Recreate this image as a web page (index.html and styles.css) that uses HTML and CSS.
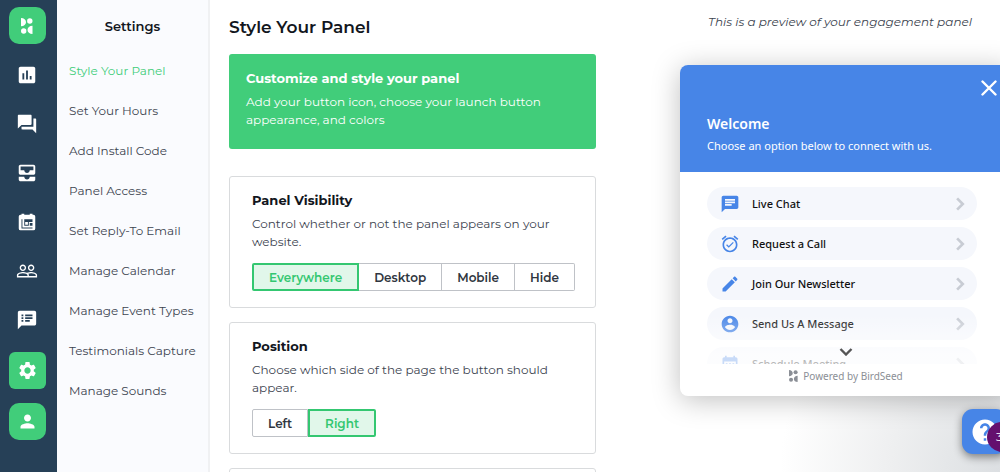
FILE: index.html
```html
<!DOCTYPE html>
<html lang="en">
<head>
  <meta charset="utf-8">
  <meta name="viewport" content="width=device-width, initial-scale=1.0">
  <title>Style Your Panel</title>
  <link rel="stylesheet" href="styles.css">
</head>
<body>
  <div class="app">

    <!-- Icon rail -->
    <nav class="rail" aria-label="Main">
      <a href="#" class="rail-item rail-logo" aria-label="BirdSeed">
        <svg viewBox="0 0 12 16" width="12" height="16"><path d="M0 0c3 0 5 2 5 4.200S3 8.200 0 8.200zM11.500 7.800c-3 0-5 2-5 4.100s2 4.100 5 4.100z"/><circle cx="8.800" cy="3" r="2.700"/><circle cx="2.700" cy="13" r="2.700"/></svg>
      </a>
      <a href="#" class="rail-item" aria-label="Reports">
        <svg viewBox="0 0 24 24" width="22" height="22"><path d="M19 3H5c-1.100 0-2 .9-2 2v14c0 1.100.9 2 2 2h14c1.100 0 2-.9 2-2V5c0-1.100-.9-2-2-2zM9 17H7v-7h2v7zm4 0h-2V7h2v10zm4 0h-2v-4h2v4z"/></svg>
      </a>
      <a href="#" class="rail-item" aria-label="Chats">
        <svg viewBox="0 0 24 24" width="22" height="22"><path d="M21 6h-2v9H6v2c0 .55.45 1 1 1h11l4 4V7c0-.55-.45-1-1-1zm-4 6V3c0-.55-.45-1-1-1H3c-.55 0-1 .45-1 1v14l4-4h10c.55 0 1-.45 1-1z"/></svg>
      </a>
      <a href="#" class="rail-item" aria-label="Inbox">
        <svg viewBox="0 0 24 24" width="22" height="22"><path d="M19 3H5c-1.100 0-2 .9-2 2v7c0 1.100.9 2 2 2h14c1.100 0 2-.9 2-2V5c0-1.100-.9-2-2-2zm0 6h-4c0 1.620-1.380 3-3 3s-3-1.380-3-3H5V5h14v4zm-4 7h6v3c0 1.100-.9 2-2 2H5c-1.100 0-2-.9-2-2v-3h6c0 1.660 1.340 3 3 3s3-1.340 3-3z"/></svg>
      </a>
      <a href="#" class="rail-item" aria-label="Calendar">
        <svg viewBox="0 0 24 24" width="22" height="22"><path fill-rule="evenodd" d="M5 4h1V3h3v1h6V3h3v1h1a2 2 0 0 1 2 2v13a2 2 0 0 1-2 2H5a2 2 0 0 1-2-2V6a2 2 0 0 1 2-2zM6 9v10h12v-1H7V9zm3 0v7h5v-4h4V9zm1 3h3v3h-3zm5 1v3h3v-3z"/></svg>
      </a>
      <a href="#" class="rail-item" aria-label="Contacts">
        <svg viewBox="0 0 24 24" width="22" height="22"><path d="M16.500 13c-1.200 0-3.070.34-4.500 1-1.430-.67-3.300-1-4.500-1C5.330 13 1 14.080 1 16.250V19h22v-2.750c0-2.170-4.330-3.250-6.500-3.250zm-4 4.500h-10v-1.250c0-.54 2.560-1.750 5-1.750s5 1.210 5 1.750v1.250zm9 0H14v-1.250c0-.46-.2-.86-.52-1.220.88-.3 1.960-.53 3.020-.53 2.440 0 5 1.210 5 1.750v1.250zM7.500 12c1.930 0 3.500-1.570 3.500-3.500S9.430 5 7.500 5 4 6.570 4 8.500 5.570 12 7.500 12zm0-5.500c1.100 0 2 .9 2 2s-.9 2-2 2-2-.9-2-2 .9-2 2-2zm9 5.500c1.930 0 3.500-1.570 3.500-3.500S18.430 5 16.500 5 13 6.570 13 8.500s1.570 3.500 3.500 3.500zm0-5.500c1.100 0 2 .9 2 2s-.9 2-2 2-2-.9-2-2 .9-2 2-2z"/></svg>
      </a>
      <a href="#" class="rail-item" aria-label="Testimonials">
        <svg viewBox="0 0 24 24" width="22" height="22"><path d="M20 2H4c-1.100 0-2 .9-2 2v18l4-4h14c1.100 0 2-.9 2-2V4c0-1.100-.9-2-2-2zM8 14H6v-2h2v2zm0-3H6V9h2v2zm0-3H6V6h2v2zm7 6h-5v-2h5v2zm3-3h-8V9h8v2zm0-3h-8V6h8v2z"/></svg>
      </a>
      <a href="#" class="rail-item rail-active" aria-label="Settings">
        <svg viewBox="0 0 24 24" width="21" height="21"><path d="M19.140 12.940c.04-.3.06-.61.06-.94 0-.32-.02-.64-.07-.94l2.030-1.580c.18-.14.23-.41.12-.61l-1.920-3.320c-.12-.22-.37-.29-.59-.22l-2.390.96c-.5-.38-1.030-.7-1.620-.94l-.36-2.540c-.04-.24-.24-.41-.48-.41h-3.840c-.24 0-.43.17-.47.41l-.36 2.540c-.59.24-1.130.57-1.620.94l-2.390-.96c-.22-.08-.47 0-.59.22L2.740 8.870c-.12.21-.08.47.12.61l2.030 1.580c-.05.3-.09.63-.09.94s.02.64.07.94l-2.030 1.580c-.18.14-.23.41-.12.61l1.920 3.320c.12.22.37.29.59.22l2.390-.96c.5.38 1.030.7 1.620.94l.36 2.540c.05.24.24.41.48.41h3.840c.24 0 .44-.17.47-.41l.36-2.540c.59-.24 1.130-.56 1.620-.94l2.390.96c.22.08.47 0 .59-.22l1.920-3.320c.12-.22.07-.47-.12-.61l-2.010-1.580zM12 15.600c-1.980 0-3.600-1.620-3.600-3.600s1.620-3.600 3.600-3.600 3.600 1.620 3.600 3.600-1.620 3.600-3.600 3.600z"/></svg>
      </a>
      <a href="#" class="rail-item rail-active rail-profile" aria-label="Profile">
        <svg viewBox="0 0 24 24" width="21" height="21"><path d="M12 12c2.210 0 4-1.790 4-4s-1.790-4-4-4-4 1.790-4 4 1.790 4 4 4zm0 2c-2.670 0-8 1.340-8 4v2h16v-2c0-2.660-5.330-4-8-4z"/></svg>
      </a>
    </nav>

    <!-- Settings menu -->
    <aside class="menu">
      <h2 class="menu-title">Settings</h2>
      <ul class="menu-list">
        <li><a href="#" class="current">Style Your Panel</a></li>
        <li><a href="#">Set Your Hours</a></li>
        <li><a href="#">Add Install Code</a></li>
        <li><a href="#">Panel Access</a></li>
        <li><a href="#">Set Reply-To Email</a></li>
        <li><a href="#">Manage Calendar</a></li>
        <li><a href="#">Manage Event Types</a></li>
        <li><a href="#">Testimonials Capture</a></li>
        <li><a href="#">Manage Sounds</a></li>
      </ul>
    </aside>

    <main class="main">
      <section class="settings">
        <h1 class="page-title">Style Your Panel</h1>

        <div class="banner">
          <h3 class="card-title">Customize and style your panel</h3>
          <p class="card-text">Add your button icon, choose your launch button appearance, and colors</p>
        </div>

        <div class="card">
          <h3 class="card-title">Panel Visibility</h3>
          <p class="card-text">Control whether or not the panel appears on your website.</p>
          <div class="segment">
            <button type="button" class="selected">Everywhere</button>
            <button type="button">Desktop</button>
            <button type="button">Mobile</button>
            <button type="button">Hide</button>
          </div>
        </div>

        <div class="card">
          <h3 class="card-title">Position</h3>
          <p class="card-text">Choose which side of the page the button should appear.</p>
          <div class="segment">
            <button type="button">Left</button>
            <button type="button" class="selected">Right</button>
          </div>
        </div>

        <div class="card"></div>
      </section>

      <!-- Live preview -->
      <section class="preview">
        <p class="preview-note">This is a preview of your engagement panel</p>

        <div class="panel">
          <header class="panel-head">
            <button type="button" class="panel-close" aria-label="Close">
              <svg viewBox="0 0 16 16" width="16" height="16"><path d="M1.500 1.500l13 13M14.500 1.500l-13 13"/></svg>
            </button>
            <h2>Welcome</h2>
            <p>Choose an option below to connect with us.</p>
          </header>

          <div class="panel-body">
            <button type="button" class="option">
              <svg class="option-icon" viewBox="0 0 24 24"><path d="M20 2H4c-1.100 0-2 .9-2 2v18l4-4h14c1.100 0 2-.9 2-2V4c0-1.100-.9-2-2-2zM6 9h12v2H6V9zm8 5H6v-2h8v2zm4-6H6V6h12v2z"/></svg>
              <span>Live Chat</span>
              <svg class="option-arrow" viewBox="0 0 8 12"><path d="M1 1l5 5-5 5"/></svg>
            </button>
            <button type="button" class="option">
              <svg class="option-icon" viewBox="0 0 24 24"><path d="M22 5.720l-4.600-3.860-1.290 1.530 4.600 3.860L22 5.720zM7.880 3.390L6.600 1.860 2 5.710l1.290 1.530 4.590-3.850zM12 4c-4.970 0-9 4.030-9 9s4.020 9 9 9c4.970 0 9-4.030 9-9s-4.030-9-9-9zm0 16c-3.870 0-7-3.130-7-7s3.130-7 7-7 7 3.130 7 7-3.130 7-7 7zm-1.460-5.470L8.410 12.400l-1.060 1.060 3.180 3.180 6-6-1.060-1.060-4.930 4.950z"/></svg>
              <span>Request a Call</span>
              <svg class="option-arrow" viewBox="0 0 8 12"><path d="M1 1l5 5-5 5"/></svg>
            </button>
            <button type="button" class="option">
              <svg class="option-icon" viewBox="0 0 24 24"><path d="M3 17.250V21h3.750L17.810 9.940l-3.750-3.750L3 17.250zM20.710 7.040c.39-.39.39-1.020 0-1.410l-2.340-2.340c-.39-.39-1.020-.39-1.410 0l-1.830 1.830 3.750 3.750 1.830-1.830z"/></svg>
              <span>Join Our Newsletter</span>
              <svg class="option-arrow" viewBox="0 0 8 12"><path d="M1 1l5 5-5 5"/></svg>
            </button>
            <button type="button" class="option">
              <svg class="option-icon" viewBox="0 0 24 24"><path d="M12 2C6.480 2 2 6.480 2 12s4.480 10 10 10 10-4.480 10-10S17.520 2 12 2zm0 3c1.660 0 3 1.340 3 3s-1.340 3-3 3-3-1.340-3-3 1.340-3 3-3zm0 14.200c-2.500 0-4.710-1.280-6-3.220.03-1.990 4-3.080 6-3.080 1.990 0 5.970 1.090 6 3.080-1.290 1.940-3.500 3.220-6 3.220z"/></svg>
              <span>Send Us A Message</span>
              <svg class="option-arrow" viewBox="0 0 8 12"><path d="M1 1l5 5-5 5"/></svg>
            </button>
            <button type="button" class="option">
              <svg class="option-icon" viewBox="0 0 24 24"><path d="M9 11H7v2h2v-2zm4 0h-2v2h2v-2zm4 0h-2v2h2v-2zm2-7h-1V2h-2v2H8V2H6v2H5c-1.110 0-2 .9-2 2v14c0 1.100.89 2 2 2h14c1.100 0 2-.9 2-2V6c0-1.100-.9-2-2-2zm0 16H5V9h14v11z"/></svg>
              <span>Schedule Meeting</span>
              <svg class="option-arrow" viewBox="0 0 8 12"><path d="M1 1l5 5-5 5"/></svg>
            </button>
            <div class="fade">
              <svg viewBox="0 0 14 8" width="14" height="8"><path d="M1.500 1l5.500 5.500L12.500 1"/></svg>
            </div>
          </div>

          <footer class="panel-foot">
            <svg viewBox="0 0 12 16" width="9" height="12"><path d="M0 0c3 0 5 2 5 4.200S3 8.200 0 8.200zM11.500 7.800c-3 0-5 2-5 4.100s2 4.100 5 4.100z"/><circle cx="8.800" cy="3" r="2.700"/><circle cx="2.700" cy="13" r="2.700"/></svg>
            Powered by BirdSeed
          </footer>
        </div>
      </section>
    </main>

    <button type="button" class="launcher" aria-label="Help">
      <svg viewBox="0 0 24 24" width="30" height="30"><path d="M12 2C6.480 2 2 6.480 2 12s4.480 10 10 10 10-4.480 10-10S17.520 2 12 2zm1 17h-2v-2h2v2zm2.070-7.750l-.9.920C13.450 12.900 13 13.500 13 15h-2v-.5c0-1.100.45-2.100 1.170-2.830l1.240-1.260c.37-.36.59-.86.59-1.410 0-1.100-.9-2-2-2s-2 .9-2 2H8c0-2.210 1.790-4 4-4s4 1.790 4 4c0 .88-.36 1.680-.93 2.250z"/></svg>
      <span class="launcher-count">3</span>
    </button>
  </div>
</body>
</html>
```
FILE: styles.css
```css
* {
  box-sizing: border-box;
}
body {
  margin: 0;
  font-family: Montserrat, Inter, sans-serif;
  font-size: 12px;
  color: #3c4450;
  background: #fff;
  overflow: hidden;
}
h1, h2, h3, p, ul {
  margin: 0;
  padding: 0;
}
a {
  text-decoration: none;
  color: inherit;
}
button {
  font: inherit;
  cursor: pointer;
}
.app {
  position: relative;
  display: flex;
  height: 100vh;
  overflow: hidden;
}

/* Icon rail */
.rail {
  flex: none;
  width: 57px;
  display: flex;
  flex-direction: column;
  align-items: center;
  gap: 12px;
  padding: 7px 3px 0 0;
  background: #264057;
}
.rail-item {
  flex: none;
  width: 37px;
  height: 37px;
  display: flex;
  align-items: center;
  justify-content: center;
  border-radius: 6px;
}
.rail-item svg {
  fill: #fff;
}
.rail-logo,
.rail-active {
  background: #41cd7a;
}
.rail-logo,
.rail-profile {
  border-radius: 10px;
}
.rail-active {
  margin-top: 2px;
}

/* Settings menu */
.menu {
  flex: none;
  width: 153px;
  background: #fafbfe;
  border-right: 2px solid #f0f1f3;
}
.menu-title {
  padding-top: 16px;
  line-height: 20px;
  font-size: 13px;
  font-weight: 600;
  text-align: center;
  color: #12161d;
}
.menu-list {
  display: flex;
  flex-direction: column;
  gap: 20px;
  margin-top: 25px;
  padding-left: 12px;
  list-style: none;
  font-size: 12px;
  line-height: 20px;
  white-space: nowrap;
}
.menu-list a {
  display: block;
}
.menu-list .current {
  color: #41cd7a;
}

.main {
  flex: 1;
  min-width: 0;
  display: grid;
  grid-template-columns: minmax(0, 1fr) 320px;
  gap: 84px;
  padding-left: 19px;
  background: radial-gradient(circle at 100% 100%, #dcdfe2 0, #eeeff0 110px, #fff 220px);
}

/* Settings column */
.settings {
  display: flex;
  flex-direction: column;
  gap: 14px;
}
.page-title {
  padding-top: 15px;
  line-height: 24px;
  font-size: 17px;
  font-weight: 600;
  color: #12161d;
}
.banner {
  margin: 1px 0 13px;
  padding: 15px 17px 20px;
  border-radius: 3px;
  background: #41cd7a;
  color: #fff;
}
.card {
  padding: 14px 22px 16px;
  border: 1px solid #d9dbdd;
  border-radius: 3px;
  background: #fff;
}
.card-title {
  margin-bottom: 6px;
  line-height: 18px;
  font-size: 13px;
  font-weight: 700;
  color: #12161d;
}
.banner .card-title {
  color: #fff;
}
.card-text {
  font-size: 12px;
  line-height: 18px;
}
.segment {
  display: flex;
  margin-top: 12px;
}
.segment button {
  height: 28px;
  padding: 0 15px;
  border: 1px solid #bfc2c7;
  background: #fff;
  font-size: 12px;
  font-weight: 600;
  color: #2f3640;
}
.segment button + button {
  border-left-width: 0;
}
.segment button:first-child {
  border-radius: 2px 0 0 2px;
}
.segment button:last-child {
  border-radius: 0 2px 2px 0;
}
.segment .selected,
.segment button + .selected {
  border: 2px solid #34c771;
  background: #e1f7ea;
  color: #34c771;
}

/* Preview column */
.preview-note {
  padding-top: 12px;
  line-height: 20px;
  font-size: 12px;
  font-style: italic;
  text-align: center;
  white-space: nowrap;
}
.panel {
  width: 332px;
  margin-top: 33px;
  border-radius: 8px;
  background: #fff;
  box-shadow: 0 4px 28px rgba(0, 0, 0, 0.25);
  font-family: "Noto Sans", sans-serif;
}
.panel-head {
  position: relative;
  padding: 49px 27px 17px;
  border-radius: 8px 8px 0 0;
  background: #4785e7;
  color: #fff;
}
.panel-head h2 {
  line-height: 20px;
  font-size: 14px;
  font-weight: 600;
}
.panel-head p {
  margin-top: 3px;
  line-height: 18px;
  font-size: 11px;
}
.panel-close {
  position: absolute;
  top: 15px;
  right: 15px;
  display: flex;
  padding: 0;
  border: 0;
  background: none;
}
.panel-close svg {
  fill: none;
  stroke: #fff;
  stroke-width: 2.4;
  stroke-linecap: round;
}
.panel-body {
  position: relative;
  height: 192px;
  display: flex;
  flex-direction: column;
  gap: 7px;
  padding: 15px 35px 0 27px;
  overflow: hidden;
}
.option {
  flex: none;
  height: 33px;
  display: flex;
  align-items: center;
  gap: 12px;
  padding: 0 12px 0 13px;
  border: 0;
  border-radius: 17px;
  background: #f5f7fc;
  font-size: 11px;
  font-weight: 500;
  text-align: left;
  color: #111;
}
.option span {
  flex: 1;
}
.option-icon {
  width: 20px;
  height: 20px;
  fill: #4785e7;
}
.option-arrow {
  width: 9px;
  height: 14px;
  fill: none;
  stroke: #c8ccd4;
  stroke-width: 2.4;
}
/* Fades out the options that can be scrolled to */
.fade {
  position: absolute;
  left: 0;
  right: 0;
  bottom: 0;
  height: 50px;
  display: flex;
  align-items: flex-end;
  justify-content: center;
  padding-bottom: 8px;
  background: linear-gradient(rgba(255, 255, 255, 0), rgba(255, 255, 255, 0.7) 80%);
}
.fade svg {
  fill: none;
  stroke: #555;
  stroke-width: 2.4;
}
.panel-foot {
  display: flex;
  align-items: center;
  justify-content: center;
  gap: 5px;
  padding: 4px 0 12px;
  line-height: 16px;
  font-size: 10px;
  color: #8b8f96;
}
.panel-foot svg {
  fill: #8b8f96;
}

/* Help button over the page corner */
.launcher {
  position: absolute;
  right: -7px;
  bottom: 18px;
  width: 45px;
  height: 45px;
  display: flex;
  align-items: center;
  justify-content: center;
  padding: 0;
  border: 0;
  border-radius: 11px;
  background: #4785e7;
  box-shadow: 0 3px 8px rgba(0, 0, 0, 0.45);
}
.launcher svg {
  fill: #fff;
}
.launcher-count {
  position: absolute;
  left: 25px;
  top: 13px;
  width: 30px;
  height: 30px;
  padding-left: 9px;
  border-radius: 50%;
  background: #640f6e;
  line-height: 30px;
  font-size: 12px;
  text-align: left;
  color: #fff;
}
```
